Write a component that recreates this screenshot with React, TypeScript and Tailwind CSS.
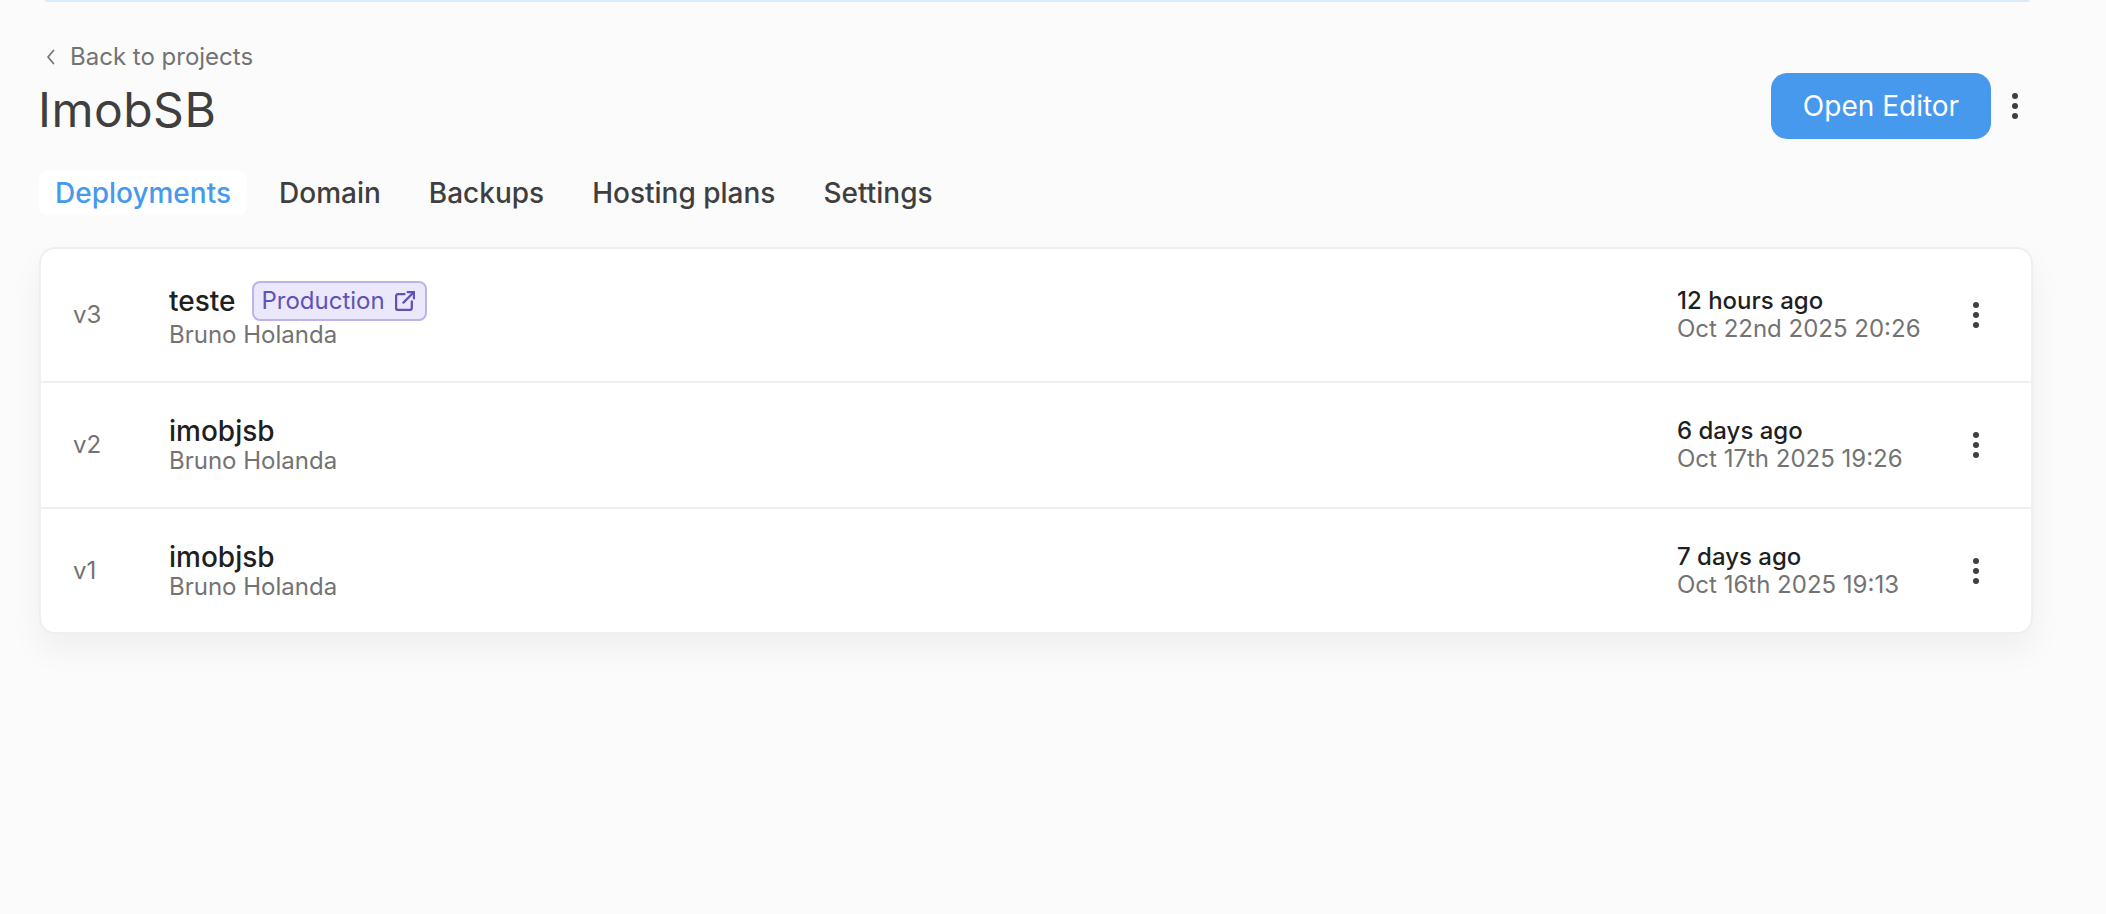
import React from "react";

const Dots = ({ className = "" }: { className?: string }) => (
  <div className={`flex flex-col gap-[4px] items-center justify-center ${className}`}>
    <span className="block w-[6px] h-[6px] rounded-full bg-[#3f3f3f]" />
    <span className="block w-[6px] h-[6px] rounded-full bg-[#3f3f3f]" />
    <span className="block w-[6px] h-[6px] rounded-full bg-[#3f3f3f]" />
  </div>
);

const rows = [
  { v: "v3", name: "teste", badge: true, rel: "12 hours ago", date: "Oct 22nd 2025 20:26", h: "h-[134px]" },
  { v: "v2", name: "imobjsb", badge: false, rel: "6 days ago", date: "Oct 17th 2025 19:26", h: "h-[126px]" },
  { v: "v1", name: "imobjsb", badge: false, rel: "7 days ago", date: "Oct 16th 2025 19:13", h: "h-[123px]" },
];

const tabs = ["Domain", "Backups", "Hosting plans", "Settings"];

export default function App() {
  return (
    <div className="h-[914px] w-[2106px] overflow-hidden bg-[#fbfbfb] font-['Inter',sans-serif]">
      <div className="mx-[45px] h-[2px] w-[1985px] rounded-b-[6px] bg-[#d9ecfc]" />
      <div className="pl-[39px] w-[2033px]">
        <div className="mt-[41px] flex h-[28px] items-center text-[24px] leading-[28px] text-[#737373]">
          <svg className="ml-[5px] mr-[10px] h-[16px] w-[16px]" viewBox="0 0 16 16" fill="none" stroke="#737373" strokeWidth="1.7" strokeLinecap="round" strokeLinejoin="round">
            <path d="M9.5 1.5 4 8l5.5 6.5" />
          </svg>
          Back to projects
        </div>
        <div className="flex items-start justify-between">
          <h1 className="ml-[-1px] mt-[10px] text-[48px] font-normal leading-[58px] tracking-[0.5px] text-[#3f3f3f]">ImobSB</h1>
          <div className="mt-[2px] flex items-center pr-[3px]">
            <button className="flex h-[66px] w-[220px] items-center justify-center rounded-[16px] bg-[#4699ed] text-[28px] text-white">Open Editor</button>
            <Dots className="ml-[19px] mr-[10px] w-[10px]" />
          </div>
        </div>
        <div className="mt-[32px] flex items-center gap-[16px] text-[28px] font-[450] leading-[44px] text-[#3f3f3f]">
          <span className="rounded-[8px] bg-white px-[16px] text-[#4699ed]">Deployments</span>
          {tabs.map((t) => (
            <span key={t} className="px-[16px]">{t}</span>
          ))}
        </div>
        <div className="mt-[32px] divide-y-2 divide-[#efefef] rounded-[16px] border-2 border-[#efefef] bg-white shadow-[0_16px_32px_rgba(0,0,0,0.05)]">
          {rows.map((r) => (
            <div key={r.v} className={`flex items-center ${r.h}`}>
              <div className="ml-[32px] w-[96px] text-[24px] text-[#737373]">{r.v}</div>
              <div className="flex-1">
                <div className="flex items-center text-[28px] font-[450] leading-[32px] text-[#1f1f1f]">
                  {r.name}
                  {r.badge && (
                    <span className="ml-[16px] flex h-[40px] items-center gap-[10px] rounded-[8px] border-2 border-[#bcb3ec] bg-[#ebe8fc] pl-[8px] pr-[10px] text-[24px] font-normal text-[#5f52b8]">
                      Production
                      <svg className="h-[20px] w-[20px]" viewBox="3 2 19 19" fill="none" stroke="#5f52b8" strokeWidth="2.2" strokeLinecap="round" strokeLinejoin="round">
                        <path d="M12 5H6a2 2 0 0 0-2 2v11a2 2 0 0 0 2 2h11a2 2 0 0 0 2-2v-6" />
                        <path d="M11 13 21 3" />
                        <path d="M15 3h6v6" />
                      </svg>
                    </span>
                  )}
                </div>
                <div className="text-[24px] leading-[28px] text-[#737373]">Bruno Holanda</div>
              </div>
              <div className="w-[294px]">
                <div className="text-[24px] font-[450] leading-[28px] text-[#1f1f1f]">{r.rel}</div>
                <div className="text-[24px] leading-[28px] text-[#737373]">{r.date}</div>
              </div>
              <Dots className="w-[10px] mr-[50px]" />
            </div>
          ))}
        </div>
      </div>
    </div>
  );
}
